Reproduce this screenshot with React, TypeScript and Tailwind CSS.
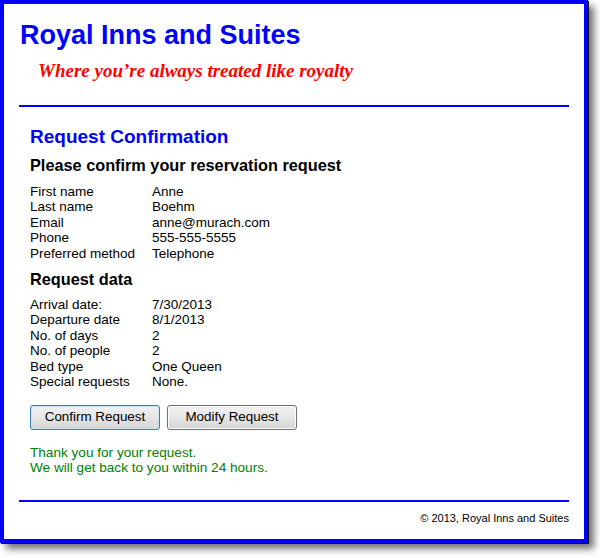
const contact: [string, string][] = [
  ["First name", "Anne"],
  ["Last name", "Boehm"],
  ["Email", "anne@murach.com"],
  ["Phone", "555-555-5555"],
  ["Preferred method", "Telephone"],
];

const request: [string, string][] = [
  ["Arrival date:", "7/30/2013"],
  ["Departure date", "8/1/2013"],
  ["No. of days", "2"],
  ["No. of people", "2"],
  ["Bed type", "One Queen"],
  ["Special requests", "None."],
];

function Rows({ rows, className }: { rows: [string, string][]; className: string }) {
  return (
    <div className={`pl-[11px] text-[13.5px] leading-[15.5px] text-black ${className}`}>
      {rows.map(([label, value]) => (
        <div key={label} className="flex">
          <span className="w-[122px] shrink-0">{label}</span>
          <span>{value}</span>
        </div>
      ))}
    </div>
  );
}

export default function App() {
  return (
    <div className="h-[558px] w-[600px] bg-white font-['Liberation_Sans',Arial,sans-serif]">
      <div className="flex h-[543px] w-[588px] flex-col border-4 border-[#0000ff] bg-white px-[15px] shadow-[1px_1px_0_#000,6px_6px_7px_rgba(0,0,0,0.55)]">
        <h1 className="mt-[15px] pl-[1px] text-[27px] font-bold leading-[32px] text-[#0000ff]">
          Royal Inns and Suites
        </h1>
        <p className="mt-[9px] pl-[19px] font-['Liberation_Serif','Times_New_Roman',serif] text-[19px] font-bold italic leading-[22px] text-[#ff0000]">
          Where you’re always treated like royalty
        </p>
        <div className="mt-[23px] h-[2px] bg-[#0000ff]" />

        <h2 className="mt-[19px] pl-[11px] text-[19px] font-bold leading-[22px] text-[#0000ff]">
          Request Confirmation
        </h2>
        <h3 className="mt-[6.5px] pl-[11px] text-[16.3px] font-bold leading-[20px] text-black">
          Please confirm your reservation request
        </h3>
        <Rows rows={contact} className="mt-[9px]" />

        <h3 className="mt-[8px] pl-[11px] text-[16.3px] font-bold leading-[20px] text-black">
          Request data
        </h3>
        <Rows rows={request} className="mt-[7.5px]" />

        <div className="mt-[15px] flex gap-[7px] pl-[11px]">
          <button
            type="button"
            className="h-[25px] w-[130px] rounded-[3px] border border-[#3c7fb1] bg-gradient-to-b from-[#f2f2f2] via-[#e6e6e6] to-[#d4d4d4] text-[13.4px] text-black shadow-[inset_0_0_0_1px_#c4e5f6]"
          >
            Confirm Request
          </button>
          <button
            type="button"
            className="h-[25px] w-[130px] rounded-[3px] border border-[#707070] bg-gradient-to-b from-[#f2f2f2] via-[#e6e6e6] to-[#d4d4d4] text-[13.4px] text-black shadow-[inset_0_0_0_1px_#fcfcfc]"
          >
            Modify Request
          </button>
        </div>

        <p className="mt-[15.5px] pl-[11px] text-[13.6px] leading-[15px] text-[#008000]">
          Thank you for your request.
          <br />
          We will get back to you within 24 hours.
        </p>

        <div className="mt-[24.5px] h-[2px] bg-[#0000ff]" />
        <p className="mt-[10.5px] text-right text-[11px] leading-[13px] text-black">
          © 2013, Royal Inns and Suites
        </p>
      </div>
    </div>
  );
}
